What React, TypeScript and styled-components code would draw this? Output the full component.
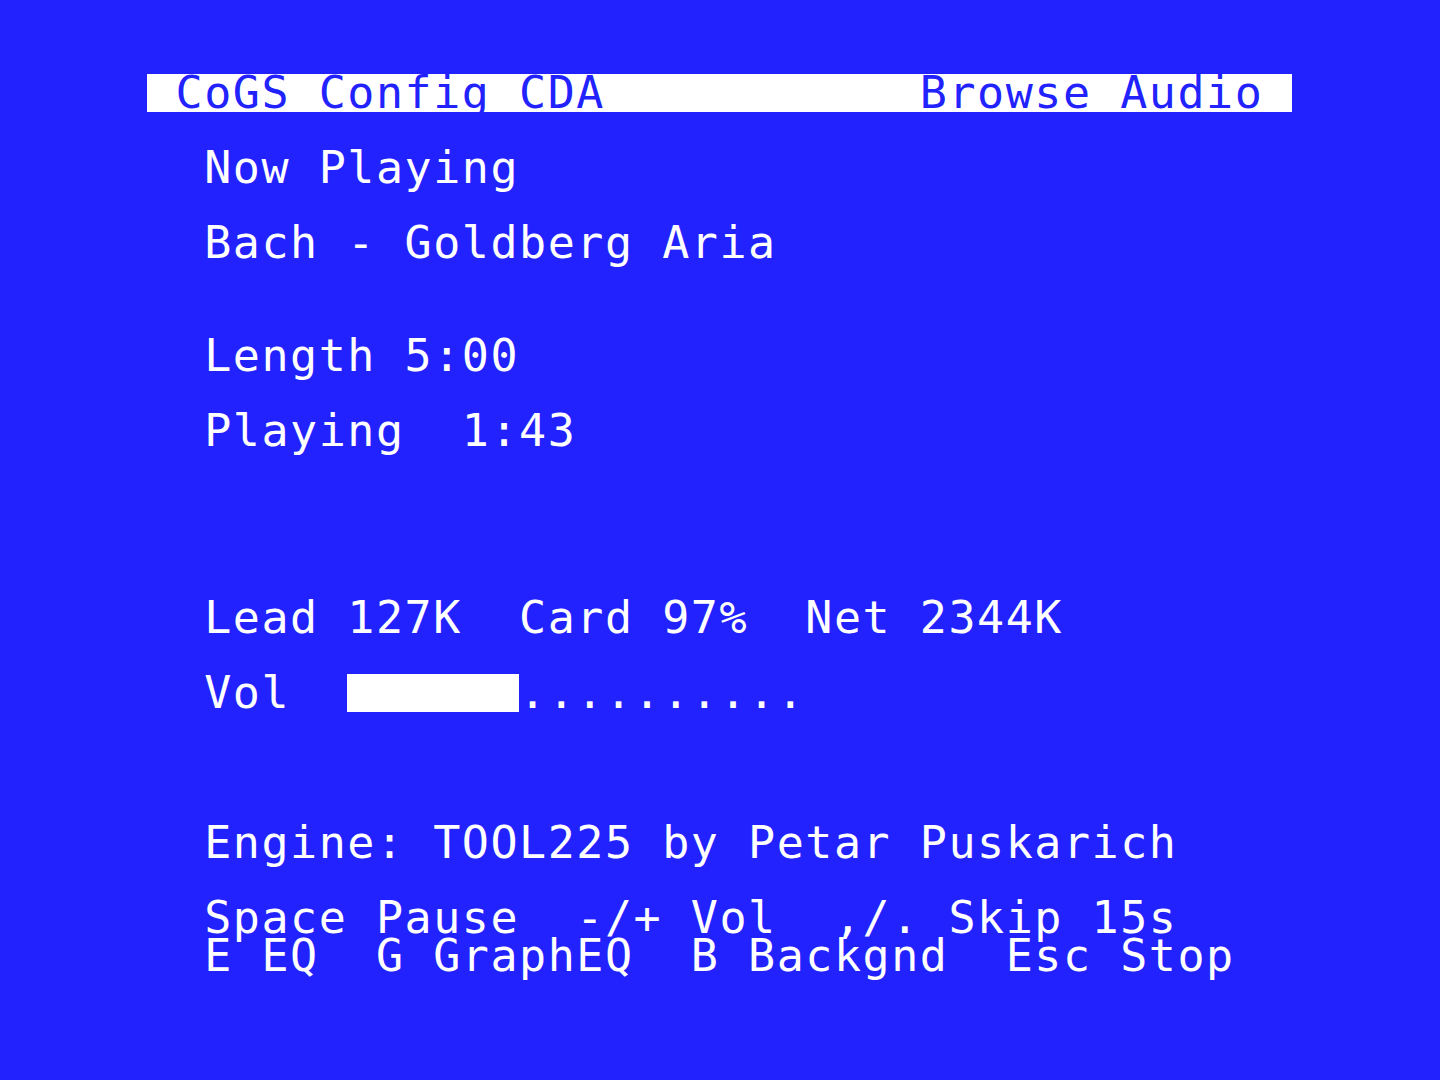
import React from 'react'
import styled, { createGlobalStyle } from 'styled-components'

const COL = 28.625
const ROW = 37.5

const GlobalStyle = createGlobalStyle`
html, body {
  margin: 0;
  padding: 0;
  background: #2222ff;
}
body {
  width: 1440px;
  height: 1080px;
  overflow: hidden;
}
`

const lines: { text?: string; inverse?: boolean; vol?: boolean; gap?: number }[] = [
  { text: ' CoGS Config CDA           Browse Audio ', inverse: true },
  { gap: 1 },
  { text: '  Now Playing' },
  { gap: 1 },
  { text: '  Bach - Goldberg Aria' },
  { gap: 2 },
  { text: '  Length 5:00' },
  { gap: 1 },
  { text: '  Playing  1:43' },
  { gap: 4 },
  { text: '  Lead 127K  Card 97%  Net 2344K' },
  { gap: 1 },
  { vol: true },
  { gap: 3 },
  { text: '  Engine: TOOL225 by Petar Puskarich' },
  { gap: 1 },
  { text: '  Space Pause  -/+ Vol  ,/. Skip 15s' },
  { text: '  E EQ  G GraphEQ  B Backgnd  Esc Stop' },
]

const volume = 6
const volumeSteps = 16

const App = () => {
  return (
    <>
      <GlobalStyle />
      <Screen>
        {lines.map((l, i) => {
          if (l.gap) return <Gap key={i} rows={l.gap} />
          if (l.vol)
            return (
              <Line key={i}>
                {'  Vol  '}
                <Level style={{ width: volume * COL }} />
                {'.'.repeat(volumeSteps - volume)}
              </Line>
            )
          return (
            <Line key={i} $inverse={l.inverse}>
              {l.text}
            </Line>
          )
        })}
      </Screen>
    </>
  )
}

export default App

const Screen = styled.div`
  width: ${40 * COL}px;
  padding: 74px 0 0 147px;
  display: flex;
  flex-direction: column;
`

const Line = styled.div<{ $inverse?: boolean }>`
  height: ${ROW}px;
  width: ${40 * COL}px;
  white-space: pre;
  font-family: 'DejaVu Sans Mono', 'Liberation Mono', monospace;
  font-size: 45px;
  letter-spacing: 1.53px;
  line-height: ${ROW}px;
  color: ${(p) => (p.$inverse ? '#2222ff' : '#ffffff')};
  background: ${(p) => (p.$inverse ? '#ffffff' : 'transparent')};
`

const Gap = styled.div<{ rows: number }>`
  height: ${(p) => p.rows * ROW}px;
`

const Level = styled.span`
  display: inline-block;
  height: ${ROW}px;
  vertical-align: top;
  background: #ffffff;
`
